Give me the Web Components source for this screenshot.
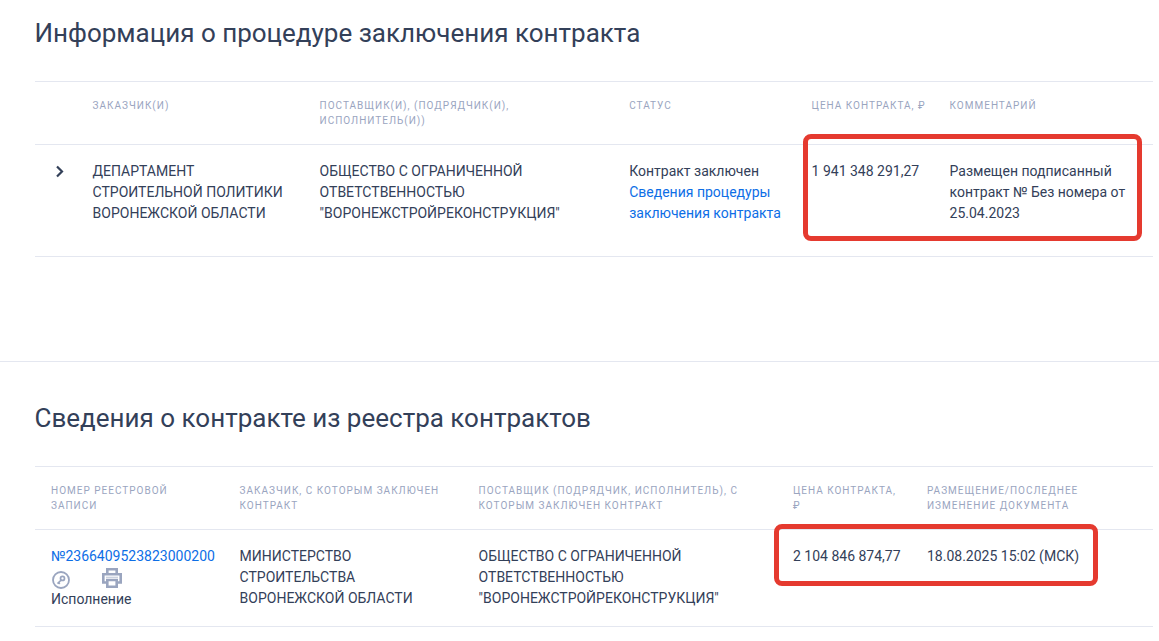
<!DOCTYPE html>
<html lang="ru">
<head>
<meta charset="utf-8">
<title>Контракт</title>
<style>
  html, body { margin: 0; background: #fff; }
  body { font-family: Roboto, "Liberation Sans", sans-serif; color: #334059; height: 641px; overflow: hidden; }
</style>
</head>
<body>
<contract-section heading="Информация о процедуре заключения контракта" class="first">
  <data-row head columns="57.6px 227px 309.6px 182.4px 138px 1fr">
    <span></span>
    <span>Заказчик(и)</span>
    <span>Поставщик(и), (подрядчик(и),<br>исполнитель(и))</span>
    <span>Статус</span>
    <span>Цена контракта, ₽</span>
    <span>Комментарий</span>
  </data-row>
  <data-row columns="57.6px 227px 309.6px 182.4px 138px 1fr">
    <span><row-chevron></row-chevron></span>
    <span>ДЕПАРТАМЕНТ<br>СТРОИТЕЛЬНОЙ ПОЛИТИКИ<br>ВОРОНЕЖСКОЙ ОБЛАСТИ</span>
    <span>ОБЩЕСТВО С ОГРАНИЧЕННОЙ<br>ОТВЕТСТВЕННОСТЬЮ<br>"ВОРОНЕЖСТРОЙРЕКОНСТРУКЦИЯ"</span>
    <span>Контракт заключен<br><a-link>Сведения процедуры<br>заключения контракта</a-link></span>
    <span>1 941 348 291,27</span>
    <span>Размещен подписанный<br>контракт № Без номера от<br>25.04.2023</span>
  </data-row>
  <red-mark slot="mark" style="left:768px;top:52px;width:339px;height:107px"></red-mark>
</contract-section>

<contract-section heading="Сведения о контракте из реестра контрактов">
  <data-row head columns="16px 188.6px 239px 314.4px 134px 1fr">
    <span></span>
    <span>Номер реестровой<br>записи</span>
    <span>Заказчик, с которым заключен<br>контракт</span>
    <span>Поставщик (подрядчик, исполнитель), с<br>которым заключен контракт</span>
    <span>Цена контракта,<br>₽</span>
    <span>Размещение/последнее<br>изменение документа</span>
  </data-row>
  <data-row class="short" columns="16px 188.6px 239px 314.4px 134px 1fr">
    <span></span>
    <span><a-link>№2366409523823000200</a-link><record-icons></record-icons>Исполнение</span>
    <span>МИНИСТЕРСТВО<br>СТРОИТЕЛЬСТВА<br>ВОРОНЕЖСКОЙ ОБЛАСТИ</span>
    <span>ОБЩЕСТВО С ОГРАНИЧЕННОЙ<br>ОТВЕТСТВЕННОСТЬЮ<br>"ВОРОНЕЖСТРОЙРЕКОНСТРУКЦИЯ"</span>
    <span>2 104 846 874,77</span>
    <span>18.08.2025 15:02 (МСК)</span>
  </data-row>
  <red-mark slot="mark" style="left:739px;top:57px;width:324px;height:62px"></red-mark>
</contract-section>

<script>
class ContractSection extends HTMLElement {
  constructor() {
    super()
    this.attachShadow({ mode: "open" })
    this.shadowRoot.innerHTML = `
      <style>
        :host { display: block; padding: 0 6px 0 35px; }
        :host(.first) { padding-bottom: 104px; border-bottom: 1px solid #e4e7f0; }
        h2 { margin: 0 0 0 -0.5px; font-weight: 400; font-size: 26px; line-height: 34px; color: #334059; padding-top: 16px; height: 81px; box-sizing: border-box; }
        :host(:not(.first)) h2 { padding-top: 39px; height: 104px; }
        .table { position: relative; border-top: 1px solid #e4e7f0; }
      </style>
      <h2></h2>
      <div class="table"><slot></slot><slot name="mark"></slot></div>
    `
    this.shadowRoot.querySelector("h2").textContent = this.getAttribute("heading")
  }
}

class DataRow extends HTMLElement {
  constructor() {
    super()
    this.attachShadow({ mode: "open" })
    this.shadowRoot.innerHTML = `
      <style>
        :host { display: grid; border-bottom: 1px solid #e4e7f0; font-size: 14px; line-height: 21px; color: #334059; padding: 16px 0 32px; }
        :host(.short) { padding-bottom: 16px; }
        :host([head]) { font-size: 10px; line-height: 15px; letter-spacing: 1px; text-transform: uppercase; color: #9aa5bf; padding: 16px 0; height: 30px; }
      </style>
      <slot></slot>
    `
    this.style.gridTemplateColumns = this.getAttribute("columns")
  }
}

class ALink extends HTMLElement {
  constructor() {
    super()
    this.attachShadow({ mode: "open" })
    this.shadowRoot.innerHTML = `<style>:host { color: #0d6ee6; }</style><slot></slot>`
  }
}

class RowChevron extends HTMLElement {
  constructor() {
    super()
    this.attachShadow({ mode: "open" })
    this.shadowRoot.innerHTML = `
      <style>:host { display: block; padding: 4px 0 0 20px; height: 14px; } svg { display: block; }</style>
      <svg width="10" height="13" viewBox="0 0 10 13" fill="none"><path d="M2 1.5 L7 6.5 L2 11.5" stroke="#334059" stroke-width="2.2"/></svg>
    `
  }
}

class RecordIcons extends HTMLElement {
  constructor() {
    super()
    this.attachShadow({ mode: "open" })
    this.shadowRoot.innerHTML = `
      <style>
        :host { display: flex; gap: 32px; align-items: center; height: 21px; margin-top: 1px; }
        svg { display: block; }
      </style>
      <svg width="18" height="18" viewBox="0 0 18 18" fill="none" stroke="#9aa5bf" style="margin: 2px 0 0 1px">
        <circle cx="9" cy="9" r="8" stroke-width="1.8"/>
        <circle cx="10.5" cy="7.4" r="2" stroke-width="1.7"/>
        <path d="M9.2 9 L5.5 12.6 M6.5 11.6 L7.8 12.9" stroke-width="1.7"/>
      </svg>
      <svg width="20" height="20" viewBox="0 0 20 20" fill="none" stroke="#9aa5bf" stroke-width="2.6" style="margin-top: -1px">
        <path d="M5.3 6 V1.3 H14.7 V6"/>
        <path d="M5 14.5 H1.3 V6.3 H18.7 V14.5 H15"/>
        <path d="M5.3 12 H14.7 V18.7 H5.3 Z"/>
        <path d="M4 9.3 H16" stroke-width="1.2" stroke="#c6cddc"/>
      </svg>
    `
  }
}

class RedMark extends HTMLElement {
  constructor() {
    super()
    this.attachShadow({ mode: "open" })
    this.shadowRoot.innerHTML = `
      <style>:host { position: absolute; box-sizing: border-box; border: 5px solid #e53a2f; border-radius: 8px; }</style>
    `
  }
}

customElements.define("contract-section", ContractSection)
customElements.define("data-row", DataRow)
customElements.define("a-link", ALink)
customElements.define("row-chevron", RowChevron)
customElements.define("record-icons", RecordIcons)
customElements.define("red-mark", RedMark)
</script>
</body>
</html>
